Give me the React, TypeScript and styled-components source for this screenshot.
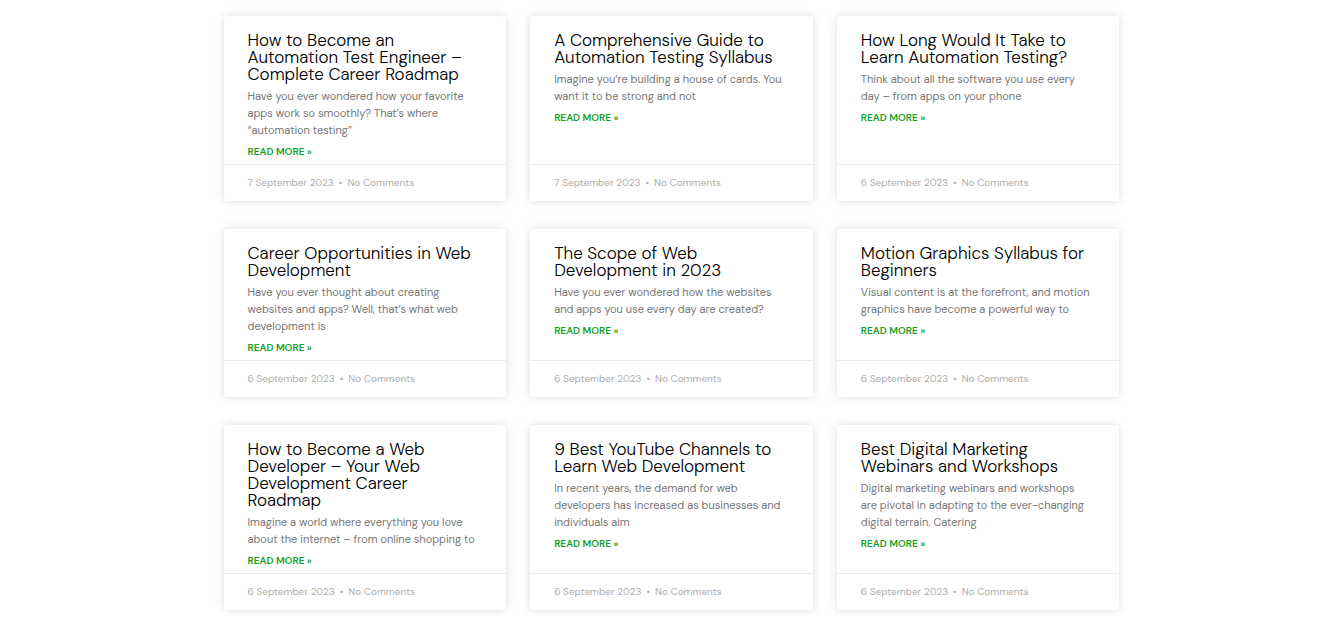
import React from "react";
import styled, { createGlobalStyle } from "styled-components";

const GlobalStyle = createGlobalStyle`
  *, *::before, *::after { box-sizing: border-box; }
  body {
    margin: 0;
    background: #fff;
    font-family: "DM Sans", Inter, "Open Sans", sans-serif;
  }
`;

const Page = styled.main`
  padding: 16px 16px 6px;
`;

const PostGrid = styled.div`
  display: grid;
  grid-template-columns: repeat(auto-fit, minmax(256px, 1fr));
  gap: 28px 24px;
  max-width: 896px;
  margin: 0 auto;
`;

const Card = styled.article`
  display: flex;
  flex-direction: column;
  background: #fff;
  border-radius: 3px;
  box-shadow: 0 0 10px rgba(0, 0, 0, 0.15);
`;

const CardBody = styled.div`
  display: flex;
  flex: 1;
  flex-direction: column;
  align-items: flex-start;
  padding: 16px 16px 5px 24px;
`;

const Title = styled.h3`
  margin: 0 0 5px;
  font-size: 17px;
  font-weight: 300;
  line-height: 17px;
  white-space: pre-line;
`;

const TitleLink = styled.a`
  color: #000;
  text-decoration: none;
`;

const Excerpt = styled.p`
  margin: 0 0 6px;
  color: #777;
  font-size: 11px;
  line-height: 17px;
  white-space: pre-line;
`;

const ReadMore = styled.a`
  color: #13a01b;
  font-size: 10px;
  font-weight: 600;
  line-height: 14px;
  text-decoration: none;
  text-transform: uppercase;
`;

const Meta = styled.footer`
  display: flex;
  align-items: center;
  padding: 11px 24px;
  border-top: 1px solid #eaeaea;
  color: #adadad;
  font-size: 10px;
  line-height: 14px;
`;

const Dot = styled.span`
  margin: 0 5px;
`;

interface Post {
  title: string;
  excerpt: string;
  date: string;
}

const posts: Post[] = [
  {
    title: "How to Become an\nAutomation Test Engineer –\nComplete Career Roadmap",
    excerpt: "Have you ever wondered how your favorite\napps work so smoothly? That’s where\n“automation testing”",
    date: "7 September 2023",
  },
  {
    title: "A Comprehensive Guide to\nAutomation Testing Syllabus",
    excerpt: "Imagine you’re building a house of cards. You\nwant it to be strong and not",
    date: "7 September 2023",
  },
  {
    title: "How Long Would It Take to\nLearn Automation Testing?",
    excerpt: "Think about all the software you use every\nday – from apps on your phone",
    date: "6 September 2023",
  },
  {
    title: "Career Opportunities in Web\nDevelopment",
    excerpt: "Have you ever thought about creating\nwebsites and apps? Well, that’s what web\ndevelopment is",
    date: "6 September 2023",
  },
  {
    title: "The Scope of Web\nDevelopment in 2023",
    excerpt: "Have you ever wondered how the websites\nand apps you use every day are created?",
    date: "6 September 2023",
  },
  {
    title: "Motion Graphics Syllabus for\nBeginners",
    excerpt: "Visual content is at the forefront, and motion\ngraphics have become a powerful way to",
    date: "6 September 2023",
  },
  {
    title: "How to Become a Web\nDeveloper – Your Web\nDevelopment Career\nRoadmap",
    excerpt: "Imagine a world where everything you love\nabout the internet – from online shopping to",
    date: "6 September 2023",
  },
  {
    title: "9 Best YouTube Channels to\nLearn Web Development",
    excerpt: "In recent years, the demand for web\ndevelopers has increased as businesses and\nindividuals aim",
    date: "6 September 2023",
  },
  {
    title: "Best Digital Marketing\nWebinars and Workshops",
    excerpt: "Digital marketing webinars and workshops\nare pivotal in adapting to the ever-changing\ndigital terrain. Catering",
    date: "6 September 2023",
  },
];

export default function App() {
  return (
    <>
      <GlobalStyle />
      <Page>
        <PostGrid>
          {posts.map((post) => (
            <Card key={post.title}>
              <CardBody>
                <Title>
                  <TitleLink href="#">{post.title}</TitleLink>
                </Title>
                <Excerpt>{post.excerpt}</Excerpt>
                <ReadMore href="#">Read More »</ReadMore>
              </CardBody>
              <Meta>
                <time>{post.date}</time>
                <Dot>•</Dot>
                <span>No Comments</span>
              </Meta>
            </Card>
          ))}
        </PostGrid>
      </Page>
    </>
  );
}
